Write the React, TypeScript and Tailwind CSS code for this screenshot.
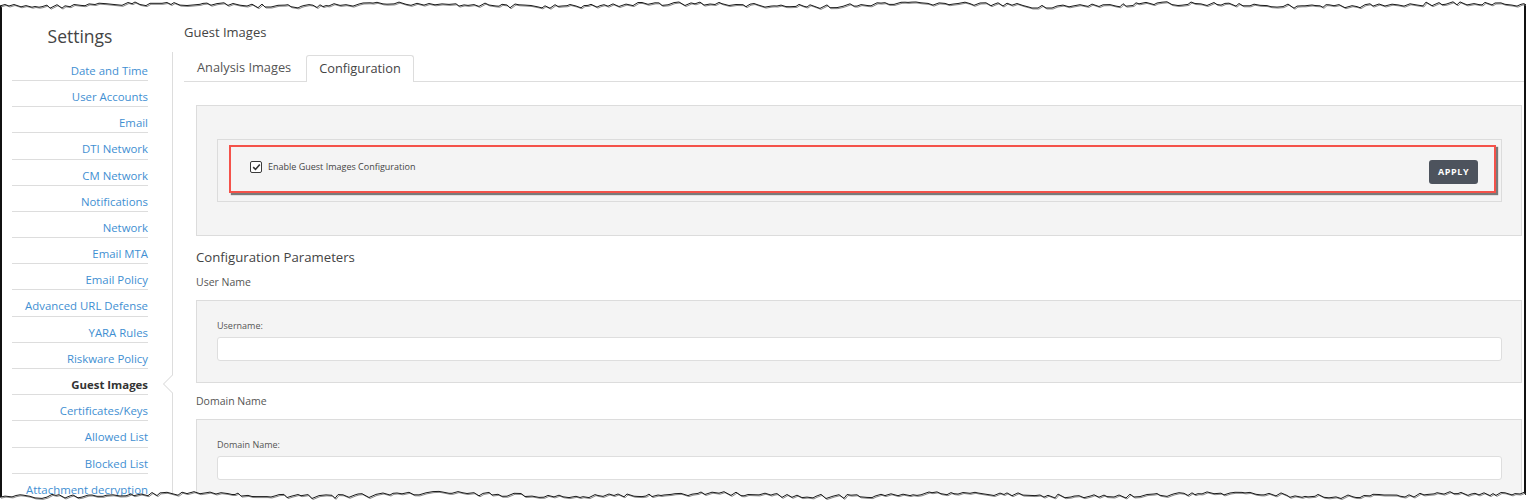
import React from "react"

const navItems = [
  "Date and Time",
  "User Accounts",
  "Email",
  "DTI Network",
  "CM Network",
  "Notifications",
  "Network",
  "Email MTA",
  "Email Policy",
  "Advanced URL Defense",
  "YARA Rules",
  "Riskware Policy",
  "Guest Images",
  "Certificates/Keys",
  "Allowed List",
  "Blocked List",
  "Attachment decryption",
]

// jagged "torn paper" edge used at top and bottom of the screenshot
function tear(seed: number, base: number, amp: number) {
  let s = seed
  const rnd = () => {
    s = (s * 9301 + 49297) % 233280
    return s / 233280
  }
  const pts: string[] = []
  let x = 0
  while (x < 1526) {
    const y = base + Math.sin(x / 41 + seed) * amp * 0.5 + (rnd() - 0.5) * amp * 1.4
    pts.push(`${x},${y.toFixed(1)}`)
    x += 3 + Math.floor(rnd() * 5)
  }
  pts.push(`1526,${base}`)
  return pts.join(" ")
}

function TornEdge({ side }: { side: "top" | "bottom" }) {
  const pts = tear(side === "top" ? 7 : 19, 6, 3)
  const fill = side === "top" ? `0,0 ${pts} 1526,0` : `0,12 ${pts} 1526,12`
  return (
    <svg
      width="1526"
      height="12"
      className={side === "top" ? "absolute left-0 top-[-1px]" : "absolute left-0 bottom-0"}
    >
      <polygon points={fill} fill="#ffffff" />
      <polyline points={pts} fill="none" stroke="#8a8a8a" strokeWidth={1} transform="translate(1,1)" />
      <polyline points={pts} fill="none" stroke="#1a1a1a" strokeWidth={1} />
    </svg>
  )
}

function Checkbox() {
  return (
    <span className="flex h-[12px] w-[12px] items-center justify-center rounded-[2px] border border-[#3a3a3a] bg-white">
      <svg width="9" height="8" viewBox="0 0 9 8">
        <path d="M1.2 4.2 L3.5 6.4 L7.8 1.4" fill="none" stroke="#333" strokeWidth={1.6} />
      </svg>
    </span>
  )
}

function FieldPanel({ label }: { label: string }) {
  return (
    <div className="border border-[#dcdcdc] bg-[#f4f4f4] pl-[20px] pr-[19px] pt-[19px] pb-[21px]">
      <p className="text-[9px] leading-[12px] text-[#555]">{label}</p>
      <div className="mt-[5px] h-[24px] rounded-[3px] border border-[#dedede] bg-white"></div>
    </div>
  )
}

export default function App() {
  return (
    <div className="relative h-[501px] w-[1526px] overflow-hidden bg-white font-['Open_Sans',sans-serif]">
      <div className="flex h-full border-l-2 border-r-2 border-[#111]">
        {/* Sidebar */}
        <aside className="w-[170px] shrink-0 pl-[10px] pr-[24px] pt-[24px]">
          <h1 className="h-[24px] text-center text-[17.5px] leading-[24px] text-[#444]">Settings</h1>
          <ul className="mt-[6.8px]">
            {navItems.map((item) => (
              <li
                key={item}
                className={
                  "h-[26.2px] whitespace-nowrap border-b border-[#dddddd] pt-[8px] text-right text-[11.4px] leading-[16px] " +
                  (item === "Guest Images" ? "font-bold text-[#333]" : "text-[#3f8fd2]")
                }
              >
                {item}
              </li>
            ))}
          </ul>
        </aside>

        {/* Main */}
        <main className="flex min-w-0 flex-1 flex-col pt-[23px]">
          <h2 className="pl-[12px] text-[13px] leading-[18px] text-[#444]">Guest Images</h2>
          <div className="relative mt-[11px] flex-1 border-l border-[#dddddd] pl-[11px] pt-[3px]">
            {/* active item notch */}
            <svg width="11" height="20" className="absolute left-[-10px] top-[323px]">
              <rect x="9" y="0" width="2" height="18" fill="#ffffff" />
              <polyline points="9.5,0 0.5,9 9.5,18" fill="none" stroke="#d4d4d4" strokeWidth={1} />
            </svg>

            {/* Tabs */}
            <div className="flex h-[27px] items-end border-b border-[#dddddd]">
              <div className="mr-[2px] flex h-[26px] items-center border border-transparent px-[12px] text-[12.8px] text-[#555]">
                Analysis Images
              </div>
              <div className="-mb-px flex h-[27px] items-center rounded-t-[3px] border border-b-0 border-[#dddddd] bg-white px-[12px] text-[12.8px] text-[#444]">
                Configuration
              </div>
            </div>

            <div className="pl-[12px] pr-[2px]">
              <div className="mt-[23px] border border-[#dcdcdc] bg-[#f4f4f4] pl-[20px] pr-[19px] pt-[33px] pb-[33px]">
                <div className="relative flex h-[63px] items-start justify-between border border-[#dcdcdc] pl-[32px] pr-[23px] pt-[20px]">
                  <label className="mt-[1px] flex items-center gap-[6px]">
                    <Checkbox />
                    <span className="text-[9px] leading-[12px] text-[#444]">Enable Guest Images Configuration</span>
                  </label>
                  <button className="h-[24px] w-[49px] rounded-[3px] bg-[#4d535d] text-[9px] font-bold tracking-[0.6px] text-white">
                    APPLY
                  </button>
                  {/* highlight annotation */}
                  <div className="pointer-events-none absolute left-[11px] right-[5px] top-[5px] bottom-[8px] border-2 border-[#f4524a] shadow-[2px_2px_1px_rgba(0,0,0,0.5)]"></div>
                </div>
              </div>

              <h3 className="mt-[12px] text-[13.2px] leading-[18px] text-[#444]">Configuration Parameters</h3>
              <p className="mt-[9px] text-[10.5px] leading-[14px] text-[#555]">User Name</p>
              <div className="mt-[11px]">
                <FieldPanel label="Username:" />
              </div>
              <p className="mt-[11px] text-[10.5px] leading-[14px] text-[#555]">Domain Name</p>
              <div className="mt-[11px]">
                <FieldPanel label="Domain Name:" />
              </div>
            </div>
          </div>
        </main>
      </div>

      <TornEdge side="top" />
      <TornEdge side="bottom" />
    </div>
  )
}
